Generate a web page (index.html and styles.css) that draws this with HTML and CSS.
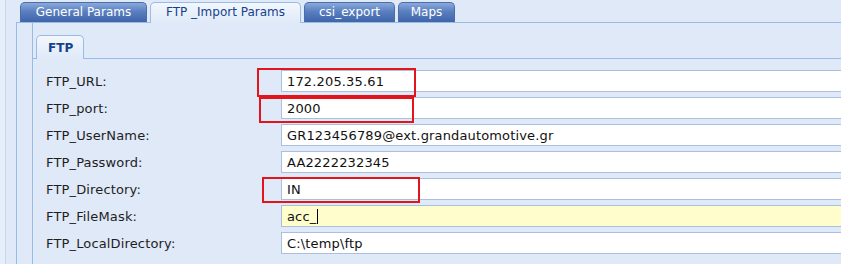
FILE: index.html
```html
<!DOCTYPE html>
<html lang="en">
<head>
    <meta charset="UTF-8">
    <meta name="viewport" content="width=device-width, initial-scale=1.0">
    <title>FTP Import Params</title>
    <link rel="stylesheet" href="styles.css">
</head>
<body>

    <div class="frame">
        <!-- Main tabs -->
        <div class="tabbar">
            <div class="tab tab-general">General Params</div>
            <div class="tab tab-ftp active">FTP _Import Params</div>
            <div class="tab tab-csi">csi_export</div>
            <div class="tab tab-maps">Maps</div>
        </div>

        <div class="panel">
            <!-- Sub tabs -->
            <div class="subtabbar">
                <div class="subtab">FTP</div>
            </div>

            <div class="subpanel">
                <div class="row">
                    <label>FTP_URL:</label>
                    <div class="field">172.205.35.61</div>
                </div>
                <div class="row">
                    <label>FTP_port:</label>
                    <div class="field">2000</div>
                </div>
                <div class="row">
                    <label>FTP_UserName:</label>
                    <div class="field">GR123456789@ext.grandautomotive.gr</div>
                </div>
                <div class="row">
                    <label>FTP_Password:</label>
                    <div class="field">AA2222232345</div>
                </div>
                <div class="row">
                    <label>FTP_Directory:</label>
                    <div class="field">IN</div>
                </div>
                <div class="row">
                    <label>FTP_FileMask:</label>
                    <div class="field focus">acc_<span class="caret"></span></div>
                </div>
                <div class="row">
                    <label>FTP_LocalDirectory:</label>
                    <div class="field">C:\temp\ftp</div>
                </div>
            </div>
        </div>

        <!-- Red highlight boxes -->
        <div class="mark mark-url"></div>
        <div class="mark mark-port"></div>
        <div class="mark mark-dir"></div>
    </div>

</body>
</html>
```

FILE: styles.css
```css
body {
    margin: 0;
    background-color: #e6eef9;
    font-family: "DejaVu Sans", Verdana, sans-serif;
    overflow: hidden;
}
.frame {
    position: relative;
    margin-left: 5px;
    height: 264px;
    padding-left: 10px;
    border-left: 1px solid #c6d6ec;
    background-color: #dfe9f8;
    overflow: hidden;
}

/* main tab strip */
.tabbar {
    display: flex;
    align-items: flex-end;
    gap: 3px;
    height: 22px;
    padding-left: 4px;
    border-bottom: 1px solid #99bbe8;
}
.tab {
    box-sizing: border-box;
    height: 20px;
    padding-top: 2px;
    text-align: center;
    font-size: 12px;
    color: #fff;
    border: 1px solid #4a6ea8;
    border-bottom: none;
    border-radius: 5px 5px 0 0;
    background: linear-gradient(#8aa9dc, #5a7fc0 45%, #3f65a9);
}
.tab.active {
    height: 21px;
    margin-bottom: -1px;
    color: #15428b;
    border-color: #99bbe8;
    background: linear-gradient(#f3f7fd, #dfe9f8);
}
.tab-general { width: 127px; }
.tab-ftp { width: 151px; }
.tab-csi { width: 91px; }
.tab-maps { width: 57px; }

/* outer panel */
.panel {
    height: 260px;
    padding-left: 15px;
    border-left: 1px solid #99bbe8;
    background-color: #dfe9f8;
}
.subtabbar {
    display: flex;
    align-items: flex-end;
    height: 35px;
    padding-left: 3px;
    border-bottom: 1px solid #99bbe8;
    border-left: 1px solid #99bbe8;
}
.subtab {
    box-sizing: border-box;
    width: 48px;
    height: 24px;
    margin-bottom: -1px;
    padding: 5px 0 0 11px;
    font-size: 12px;
    font-weight: bold;
    color: #15428b;
    border: 1px solid #99bbe8;
    border-bottom: none;
    border-radius: 5px 5px 0 0;
    background: linear-gradient(#f3f7fd, #dfe9f8);
}
.subpanel {
    display: flex;
    flex-direction: column;
    gap: 5px;
    height: 220px;
    padding: 11px 0 0 13px;
    border-left: 1px solid #99bbe8;
}

/* form rows */
.row {
    display: flex;
    align-items: center;
    height: 22px;
}
.row label {
    width: 235px;
    flex-shrink: 0;
    font-size: 13px;
    letter-spacing: 0.15px;
    color: #1e1e1e;
}
.field {
    box-sizing: border-box;
    flex-shrink: 0;
    width: 620px;
    height: 22px;
    padding: 3px 0 0 5px;
    font-size: 13px;
    letter-spacing: 0.15px;
    color: #111;
    background-color: #fff;
    border: 1px solid #a9c0de;
    border-right: none;
}
.field.focus {
    background-color: #fffdcc;
}
.caret {
    display: inline-block;
    width: 1px;
    height: 15px;
    margin-left: 1px;
    vertical-align: -3px;
    background-color: #000;
}

/* annotation boxes drawn over the form */
.mark {
    position: absolute;
    box-sizing: border-box;
    border: 2px solid #e3141b;
}
.mark-url {
    left: 251px;
    top: 68px;
    width: 159px;
    height: 29px;
}
.mark-port {
    left: 253px;
    top: 97px;
    width: 155px;
    height: 26px;
}
.mark-dir {
    left: 256px;
    top: 177px;
    width: 158px;
    height: 26px;
}
```
